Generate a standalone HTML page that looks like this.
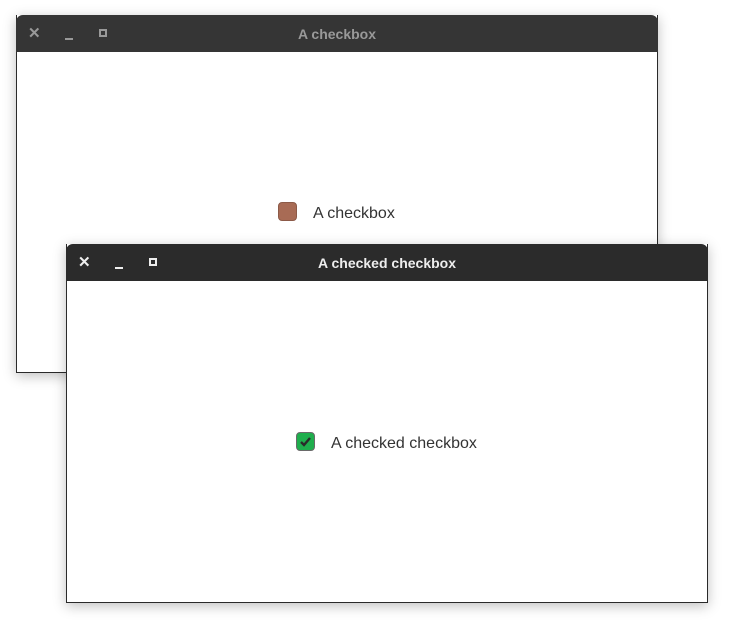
<!DOCTYPE html>
<html><head><style>
body{margin:0;width:731px;height:629px;background:#fff;position:relative;overflow:hidden;font-family:"Liberation Sans",sans-serif}
.win{position:absolute;background:#fff;border:1px solid #2a2a2a;border-top:none;box-shadow:0 3px 12px rgba(0,0,0,.25)}
.tb{position:absolute;left:-1px;right:-1px;top:0;height:37px;background:#353535;border-radius:7px 7px 0 0;color:#999;font-weight:bold;font-size:14px;text-align:center;line-height:39px}
.w2 .tb{background:#2b2b2b;color:#eee}
.x{position:absolute;left:12px;top:-1px;font-size:15px}
.mn{position:absolute;left:49px;top:23px;width:8px;height:2px;background:#999}
.mx{position:absolute;left:83px;top:14px;width:4px;height:4px;border:2px solid #999}
.w2 .mn{background:#eee}.w2 .mx{border-color:#eee}
.cb{position:absolute;width:19px;height:19px;border-radius:4px;box-sizing:border-box}
.lbl{position:absolute;font-size:16px;color:#333}
</style></head><body>
<div class="win w1" style="left:16px;top:15px;width:640px;height:357px">
<div class="tb"><span class="x">✕</span><div class="mn"></div><div class="mx"></div>A checkbox</div>
<div class="cb" style="left:261px;top:187px;background:#a86b55;border:1px solid #8c5a48"></div>
<div class="lbl" style="left:296px;top:190px">A checkbox</div>
</div>
<div class="win w2" style="left:66px;top:244px;width:640px;height:358px">
<div class="tb"><span class="x">✕</span><div class="mn"></div><div class="mx"></div>A checked checkbox</div>
<div class="cb" style="left:229px;top:188px;background:#1fae4d;border:1px solid #6a6a6a">
<svg width="17" height="17" viewBox="0 0 17 17" style="position:absolute;left:0;top:0"><path d="M4 9 L7 12 L13 5" stroke="#2a2a2a" stroke-width="2.4" fill="none"/></svg></div>
<div class="lbl" style="left:264px;top:191px">A checked checkbox</div>
</div>
</body></html>
